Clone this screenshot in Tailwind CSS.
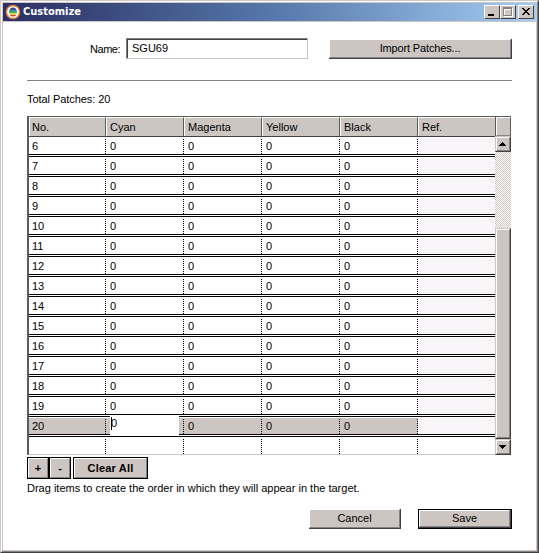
<!DOCTYPE html>
<html lang="en">
<head>
<meta charset="utf-8">
<title>Customize</title>
<script src="https://cdn.jsdelivr.net/npm/@tailwindcss/browser@4"></script>
</head>
<body class="w-[539px] h-[553px] overflow-hidden bg-white font-['Liberation_Sans',Arial,sans-serif] text-[11px] text-black">
<div class="w-[539px] h-[553px] border border-[#d0c8c4] border-r-[#424045] border-b-[#424045]">
<div class="w-full h-full border border-white border-r-[#848284] border-b-[#848284]">
<div class="w-full h-full border border-[#ccc5c1] flex flex-col">
  <header class="h-[19px] shrink-0 flex items-center pl-[2px] pr-[2px] border-b border-[#ccc5c1] bg-linear-to-r from-[#2b2f62] via-[#5577aa] to-[#a5cdf3]">
    <svg class="w-4 h-4 shrink-0" viewBox="0 0 16 16">
      <defs><clipPath id="disc"><ellipse cx="8" cy="8" rx="4" ry="4.600"/></clipPath></defs>
      <circle cx="8" cy="8" r="6.600" fill="#fff" stroke="#d9813f" stroke-width="1.500"/>
      <g clip-path="url(#disc)"><path fill="#3b4a9c" d="M2 2h12v4H2z"/><path fill="#2f9a94" d="M2 6h12v2H2z"/><path fill="#5bb04c" d="M2 8h12v1.500H2z"/><path fill="#edcf3c" d="M2 9.500h12v1.500H2z"/><path fill="#c84433" d="M2 11h12v3H2z"/></g>
    </svg>
    <h1 class="ml-[2px] font-['DejaVu_Sans_Condensed','DejaVu_Sans',sans-serif] font-bold text-[11px] text-white grow">Customize</h1>
    <div class="flex h-[14px]">
      <div class="w-4 h-[14px] bg-[#ccc5c1] border border-white border-r-[#424045] border-b-[#424045]"><svg class="w-[14px] h-3" viewBox="0 0 14 12"><path fill="#000" d="M3 8h6v2H3z"/></svg></div>
      <div class="w-4 h-[14px] bg-[#ccc5c1] border border-white border-r-[#424045] border-b-[#424045]"><svg class="w-[14px] h-3" viewBox="0 0 14 12" shape-rendering="crispEdges"><path fill="#fff" d="M3 2h9v9H3z"/><path fill="#848284" d="M2 1h9v9H2z"/><path fill="#ccc5c1" d="M3 3h7v6H3z"/><path fill="#fff" d="M3 3h7v1H3zM3 3h1v6H3z"/></svg></div>
      <div class="ml-[2px] w-4 h-[14px] bg-[#ccc5c1] border border-white border-r-[#424045] border-b-[#424045]"><svg class="w-[14px] h-3" viewBox="0 0 14 12" shape-rendering="crispEdges"><path fill="#000" d="M3 2h2v1h1v1h2V3h1V2h2v1h-1v1H9v1H8v1h1v1h1v1h1v1H9V8H8V7H6v1H5v1H3V8h1V7h1V6h1V5H5V4H4V3H3z"/></svg></div>
    </div>
  </header>

  <main class="grow pl-6 pr-6 pt-4">
    <div class="flex h-[21px]">
      <label class="w-[93px] text-right leading-[22px] tracking-[-0.5px]">Name:</label>
      <div class="ml-[6px] w-[182px] border border-[#848284] border-r-[#ccc5c1] border-b-[#ccc5c1]"><div class="h-full border-l border-t border-[#424045] pl-[4px] leading-[17px]">SGU69</div></div>
      <div class="ml-[21px] mt-px w-[183px] h-[20px] border-r border-b border-[#424045]"><div class="h-full bg-[#ccc5c1] border border-white border-r-[#848284] border-b-[#848284] text-center leading-[17px] tracking-[-0.15px]">Import Patches...</div></div>
    </div>
    <div class="mt-[21px] h-px w-[485px] bg-[#848284]"></div>
    <p class="mt-[11px] h-[15px] leading-[15px] tracking-[-0.06px]">Total Patches: 20</p>

    <section class="mt-[9px] w-[484px] h-[339px] border-t border-l border-[#5a5c5a] flex">
      <div class="w-[467px] h-[338px] border-b border-[#ccc5c1] border-l border-l-[#5a5c5a]">
        <div id="head" class="flex h-[20px] border-b border-[#424045]"></div>
        <div id="rows"></div>
      </div>
      <div class="w-4 h-[338px] flex flex-col">
        <div class="h-[19px] border-l border-[#5a5c5a]"><div class="h-full bg-[#ccc5c1] border border-white border-r-[#5a5c5a] border-b-[#848284]"></div></div>
        <div class="h-4 border border-[#ccc5c1] border-r-[#424045] border-b-[#424045]"><div class="h-full bg-[#ccc5c1] border border-white border-r-[#848284] border-b-[#848284]"><svg class="w-3 h-3" viewBox="0 0 12 12" shape-rendering="crispEdges"><path d="M5 4h1v1h1v1h1v1h1v1H2V7h1V6h1V5h1z"/></svg></div></div>
        <div class="h-[76px] bg-[repeating-conic-gradient(#ccc5c1_0_25%,#fff_0_50%)] bg-size-[2px_2px]"></div>
        <div class="grow border border-[#ccc5c1] border-r-[#424045] border-b-[#424045]"><div class="h-full bg-[#ccc5c1] border border-white border-r-[#848284] border-b-[#848284]"></div></div>
        <div class="h-4 border border-[#ccc5c1] border-r-[#424045] border-b-[#424045]"><div class="h-full bg-[#ccc5c1] border border-white border-r-[#848284] border-b-[#848284]"><svg class="w-3 h-3" viewBox="0 0 12 12" shape-rendering="crispEdges"><path d="M2 4h7v1H8v1H7v1H6v1H5V7H4V6H3V5H2z"/></svg></div></div>
      </div>
    </section>

    <div class="mt-[2px] flex h-[22px] font-bold leading-[19px] text-center">
      <div class="w-[22px] border border-black"><div class="h-full bg-[#ccc5c1] border border-white border-r-[#848284] border-b-[#848284]">+</div></div>
      <div class="w-[22px] border border-black"><div class="h-full bg-[#ccc5c1] border border-white border-r-[#848284] border-b-[#848284]">-</div></div>
      <div class="ml-[2px] w-[75px] border border-black"><div class="h-full bg-[#ccc5c1] border border-white border-r-[#848284] border-b-[#848284] tracking-[0.2px]">Clear All</div></div>
    </div>
    <p class="mt-[2px] h-[15px] leading-[15px] whitespace-nowrap">Drag items to create the order in which they will appear in the target.</p>
    <div class="mt-[13px] flex pl-[282px] text-center">
      <div class="w-[92px] h-[20px] border-r border-b border-[#424045]"><div class="h-full bg-[#ccc5c1] border border-white border-r-[#848284] border-b-[#848284] leading-[17px]">Cancel</div></div>
      <div class="ml-[17px] w-[94px] h-[20px] border border-black"><div class="h-full border-r border-b border-[#424045]"><div class="h-full bg-[#ccc5c1] border border-white border-r-[#848284] border-b-[#848284] leading-[15px]">Save</div></div></div>
    </div>
  </main>
</div></div></div>
<script>
const names = ['No.', 'Cyan', 'Magenta', 'Yellow', 'Black', 'Ref.'];
document.getElementById('head').innerHTML = names.map((n, i) =>
  `<div class="${i ? 'w-[78px] pl-[3px]' : 'w-[77px] pl-[2px]'} ${i === 5 ? 'border-r-[#ccc5c1]' : 'border-r-[#5a5c5a]'} shrink-0 h-[19px] bg-[#ccc5c1] border-t border-l border-white border-r leading-[19px]">${n}</div>`).join('');
let html = '';
for (let n = 6; n <= 21; n++) {
  const blank = n === 21, sel = n === 20;
  let cells = '';
  for (let c = 0; c < 6; c++) {
    const text = blank || (sel && c === 1) ? '' : c === 0 ? n : c < 5 ? 0 : '';
    const fill = c === 5 ? (blank ? '' : 'border-t border-l border-white bg-[#f7f5f7]') : sel ? 'border-t border-white bg-[#ccc5c1]' : 'border-t border-white';
    const dots = c < 5 ? '<i class="ml-auto w-px h-[15px] mt-px bg-[repeating-linear-gradient(#000_0_1px,transparent_1px_2px)]"></i>' : '';
    const editor = sel && c === 1 ? '<div class="absolute left-[4px] -top-[3px] w-[69px] h-[21px] bg-white flex"><i class="ml-px mt-[2px] w-px h-[13px] bg-black"></i><span class="-ml-px leading-[17px]">0</span></div>' : '';
    cells += `<div class="${c ? c === 5 ? 'w-[77px]' : 'w-[78px]' : 'w-[77px]'} shrink-0 h-[17px] relative flex ${fill}"><span class="${c ? 'pl-[4px]' : 'pl-[3px]'} leading-[17px]">${text}</span>${dots}${editor}</div>`;
  }
  html += `<div class="w-[466px] ${blank ? 'h-[17px]' : 'h-[20px]'}"><div class="flex">${cells}</div>${blank ? '' : '<div class="h-[3px] border-y border-black"></div>'}</div>`;
}
document.getElementById('rows').innerHTML = html;
</script>
</body>
</html>
